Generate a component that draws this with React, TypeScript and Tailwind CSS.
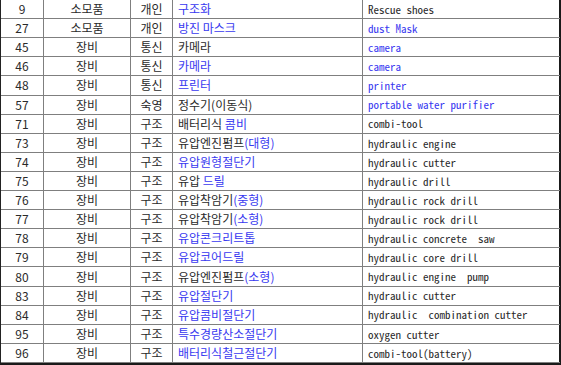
import React from "react";

type Seg = { t: string; b?: boolean };
type Row = { no: string; kind: string; cat: string; ko: Seg[]; en: string; enBlue?: boolean };

const rows: Row[] = [
  { no: "9", kind: "소모품", cat: "개인", ko: [{ t: "구조화", b: true }], en: "Rescue shoes" },
  { no: "27", kind: "소모품", cat: "개인", ko: [{ t: "방진 마스크", b: true }], en: "dust Mask", enBlue: true },
  { no: "45", kind: "장비", cat: "통신", ko: [{ t: "카메라" }], en: "camera", enBlue: true },
  { no: "46", kind: "장비", cat: "통신", ko: [{ t: "카메라", b: true }], en: "camera", enBlue: true },
  { no: "48", kind: "장비", cat: "통신", ko: [{ t: "프린터", b: true }], en: "printer", enBlue: true },
  { no: "57", kind: "장비", cat: "숙영", ko: [{ t: "정수기(이동식)" }], en: "portable water purifier", enBlue: true },
  { no: "71", kind: "장비", cat: "구조", ko: [{ t: "배터리식 " }, { t: "콤비", b: true }], en: "combi-tool" },
  { no: "73", kind: "장비", cat: "구조", ko: [{ t: "유압엔진펌프" }, { t: "(대형)", b: true }], en: "hydraulic engine" },
  { no: "74", kind: "장비", cat: "구조", ko: [{ t: "유압원형절단기", b: true }], en: "hydraulic cutter" },
  { no: "75", kind: "장비", cat: "구조", ko: [{ t: "유압 " }, { t: "드릴", b: true }], en: "hydraulic drill" },
  { no: "76", kind: "장비", cat: "구조", ko: [{ t: "유압착암기" }, { t: "(중형)", b: true }], en: "hydraulic rock drill" },
  { no: "77", kind: "장비", cat: "구조", ko: [{ t: "유압착암기" }, { t: "(소형)", b: true }], en: "hydraulic rock drill" },
  { no: "78", kind: "장비", cat: "구조", ko: [{ t: "유압콘크리트톱", b: true }], en: "hydraulic concrete  saw" },
  { no: "79", kind: "장비", cat: "구조", ko: [{ t: "유압코어드릴", b: true }], en: "hydraulic core drill" },
  { no: "80", kind: "장비", cat: "구조", ko: [{ t: "유압엔진펌프" }, { t: "(소형)", b: true }], en: "hydraulic engine  pump" },
  { no: "83", kind: "장비", cat: "구조", ko: [{ t: "유압절단기", b: true }], en: "hydraulic cutter" },
  { no: "84", kind: "장비", cat: "구조", ko: [{ t: "유압콤비절단기", b: true }], en: "hydraulic  combination cutter" },
  { no: "95", kind: "장비", cat: "구조", ko: [{ t: "특수경량산소절단기", b: true }], en: "oxygen cutter" },
  { no: "96", kind: "장비", cat: "구조", ko: [{ t: "배터리식철근절단기", b: true }], en: "combi-tool(battery)" },
];

const ko = { fontFamily: '"Noto Sans CJK KR", sans-serif' };
const en = { fontFamily: '"Noto Sans Mono CJK KR", "Liberation Mono", monospace' };

const cell = "border-r border-b border-[#7f7f7f] flex items-center overflow-hidden whitespace-pre";

export default function App() {
  return (
    <div className="w-[561px] h-[365px] bg-white">
      <div
        className="w-[561px] h-[365px] grid grid-cols-[43px_87px_42px_190px_197px] grid-rows-[repeat(19,minmax(0,1fr))] border-l border-l-[#222] border-r-2 border-b-2 border-[#1a1a1a] text-[12px] text-[#2a2a2a]"
        style={ko}
      >
        {rows.map((r, i) => (
          <React.Fragment key={i}>
            <div className={`${cell} justify-center`}>{r.no}</div>
            <div className={`${cell} justify-center`}>{r.kind}</div>
            <div className={`${cell} justify-center`}>{r.cat}</div>
            <div className={`${cell} pl-[5px]`}>
              {r.ko.map((s, j) => (
                <span key={j} className={s.b ? "text-[#3838f0]" : ""}>
                  {s.t}
                </span>
              ))}
            </div>
            <div
              className={`border-b border-[#7f7f7f] flex items-center whitespace-pre pl-[5px] text-[11px] font-light ${r.enBlue ? "text-[#3838f0]" : "text-[#2a2a2a]"}`}
              style={en}
            >
              {r.en}
            </div>
          </React.Fragment>
        ))}
      </div>
    </div>
  );
}
